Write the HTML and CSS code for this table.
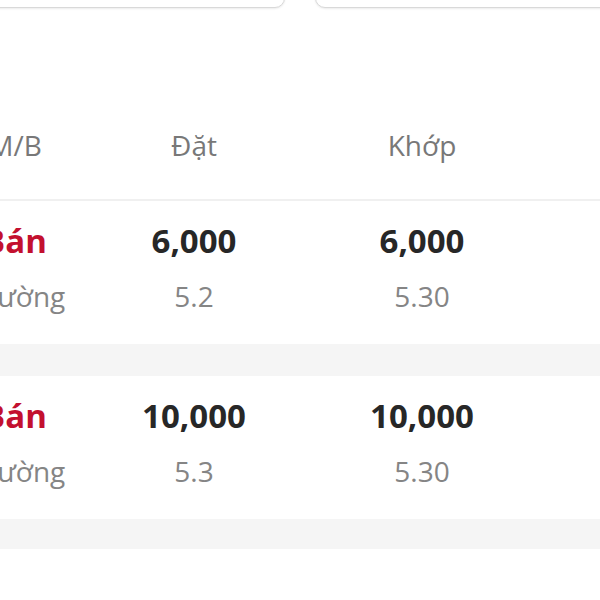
FILE: index.html
```html
<!DOCTYPE html>
<html lang="vi">
<head>
<meta charset="utf-8">
<title>Lệnh</title>
<link rel="stylesheet" href="styles.css">
</head>
<body>
<div class="cards">
  <div class="card"></div>
  <div class="card"></div>
</div>
<div class="table">
  <div class="thead">
    <div class="c c1">M/B</div>
    <div class="c c2">Đặt</div>
    <div class="c c3">Khớp</div>
  </div>
  <div class="row">
    <div class="c c1"><div class="main sell">Bán</div><div class="sub">Thường</div></div>
    <div class="c c2"><div class="main">6,000</div><div class="sub">5.2</div></div>
    <div class="c c3"><div class="main">6,000</div><div class="sub">5.30</div></div>
  </div>
  <div class="band"></div>
  <div class="row">
    <div class="c c1"><div class="main sell">Bán</div><div class="sub">Thường</div></div>
    <div class="c c2"><div class="main">10,000</div><div class="sub">5.3</div></div>
    <div class="c c3"><div class="main">10,000</div><div class="sub">5.30</div></div>
  </div>
  <div class="band band-last"></div>
</div>
</body>
</html>
```
FILE: styles.css
```css
html, body {
  margin: 0;
  padding: 0;
  background: #ffffff;
  font-family: "Open Sans", "Noto Sans", sans-serif;
  overflow: hidden;
}
.cards {
  display: flex;
  gap: 30px;
  margin: -40px -20px 0;
  height: 48px;
}
.card {
  flex: 1;
  border: 1px solid #d9d9d9;
  border-radius: 10px;
  box-shadow: 0 1px 2px rgba(0, 0, 0, 0.08);
  background: #fff;
}
.table {
  margin-left: -45px;
}
.thead, .row {
  display: grid;
  grid-template-columns: 120px 238px 218px 1fr;
}
.thead {
  padding: 118px 0 35px;
  font-size: 28px;
  line-height: 38px;
  color: #787878;
  border-bottom: 2px solid #f0f0f0;
}
.c {
  text-align: center;
  white-space: nowrap;
}
.row {
  padding: 17px 0 29px;
}
.main {
  font-size: 33px;
  line-height: 45px;
  font-weight: 700;
  color: #272727;
}
.main.sell {
  color: #c3102f;
}
.sub {
  margin-top: 14px;
  font-size: 28px;
  line-height: 38px;
  color: #858585;
}
.band {
  height: 32px;
  background: #f5f5f5;
}
.band-last {
  height: 30px;
}
```
